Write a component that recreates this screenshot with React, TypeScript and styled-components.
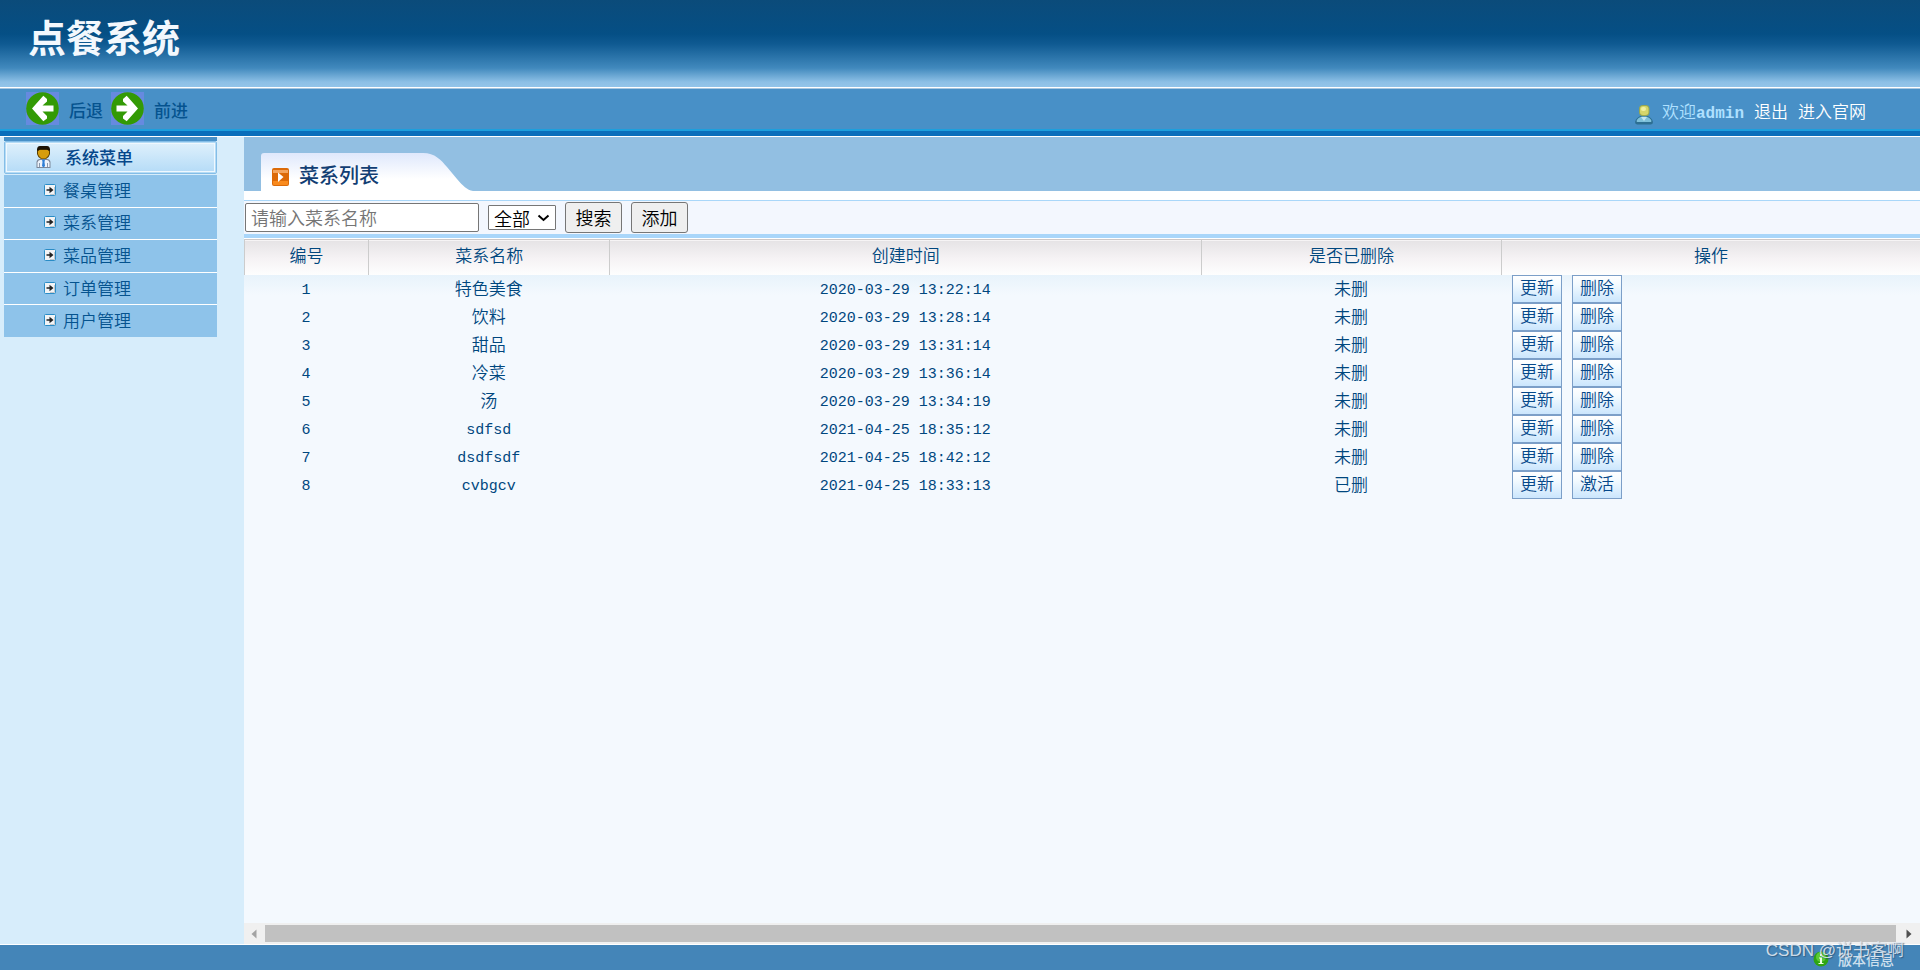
import React from 'react';
import styled, { createGlobalStyle, css } from 'styled-components';

const cjk = `'Liberation Mono', 'Noto Sans CJK SC', monospace`;
const ui = `'Noto Sans CJK SC', sans-serif`;

const GlobalStyle = createGlobalStyle`
  * { box-sizing: border-box; }
  body { margin: 0; background: #d7edfb; font-family: ${ui}; font-size: 17px; font-weight: 350; color: #00477e; }
  a { color: inherit; text-decoration: none; }
  button { font-family: inherit; font-weight: inherit; cursor: pointer; }
`;

const Page = styled.div`
  min-height: 100vh;
  display: flex;
  flex-direction: column;
`;

const Banner = styled.header`
  height: 89px;
  padding: 0 28px;
  border-bottom: 1px solid #a6c6e0;
  box-shadow: inset 0 -1px 0 #fff;
  background: linear-gradient(#0b4b7a 0, #054f85 34px, #0f5a92 44px, #4189bd 68px, #8dc0e6 82px, #94c5ea 88px);
`;

const Title = styled.h1`
  margin: 0;
  font-size: 38px;
  line-height: 72px;
  font-weight: 700;
  color: #f3f8fd;
`;

const TopBar = styled.nav`
  height: 48px;
  padding: 0 54px 0 26px;
  display: flex;
  align-items: center;
  justify-content: space-between;
  background: linear-gradient(#4890c7 0 40px, #1d9fdd 40px 42px, #0a6ebb 42px 47px, #fff 47px);
`;

const History = styled.div`
  height: 48px;
  padding: 3px 0 0;
  display: flex;
  gap: 8px;
`;

const HistoryButton = styled.button`
  height: 33px;
  padding: 0;
  border: 0;
  background: none;
  display: flex;
  align-items: center;
  gap: 10px;
  font-size: 17px;
  font-weight: 500;
  color: #05538f;

  svg { background: #668adf; }
  span { padding-top: 2px; }
`;

const Account = styled.div`
  height: 48px;
  padding-top: 10px;
  display: flex;
  line-height: 24px;
  color: #fff;

  svg { margin: 6px 9px 0 0; }
  a { margin-left: 10px; }
`;

const Welcome = styled.span`
  color: #afe0ff;

  b { font-family: 'Liberation Mono', monospace; font-size: 16px; font-weight: 700; }
`;

const Body = styled.div`
  flex: 1;
  display: flex;
  border-bottom: 1px solid #fff;
`;

const Sidebar = styled.aside`
  width: 244px;
  flex: none;
  padding: 0 27px 0 4px;
`;

const MenuHead = styled.h2`
  margin: 0;
  height: 38px;
  border-top: 4px solid #4890c7;
  display: flex;
  font-size: 17px;
  font-weight: 500;
  line-height: 24px;
  color: #05478a;
`;

const MenuHeadInner = styled.span`
  flex: 1;
  margin-bottom: 1px;
  padding: 0 0 2px 31px;
  display: flex;
  align-items: center;
  gap: 14px;
  border: 1px solid #84bde7;
  border-radius: 2px;
  box-shadow: inset 0 0 0 1px #b5dcf6, inset 0 0 0 2px #f0f8fe;
  background: linear-gradient(#e0f1fc, #b4dbf7);
`;

const Menu = styled.ul`
  margin: 0;
  padding: 0;
  height: 162px;
  list-style: none;
  display: grid;
  grid-template-rows: repeat(5, 1fr);
  gap: 1px;
  background: #fff;
`;

const MenuLink = styled.a`
  height: 100%;
  padding: 0 0 2px 40px;
  display: flex;
  align-items: center;
  gap: 7px;
  line-height: 24px;
  background: #8ec3ea;
  color: #05538f;
`;

const Main = styled.main`
  flex: 1;
  min-width: 0;
  display: flex;
  flex-direction: column;
  background: #f4f9fe;
`;

const TabStrip = styled.div`
  height: 63px;
  padding: 16px 17px 0;
  background: linear-gradient(#92bfe2 0 54px, #fff 54px);
`;

const Tab = styled.h2`
  margin: 0;
  width: 212px;
  height: 38px;
  padding: 5px 0 0 11px;
  display: flex;
  align-items: center;
  gap: 10px;
  font-size: 20px;
  font-weight: 500;
  line-height: 32px;
  color: #123e73;
  background: linear-gradient(#dfe8fc, #fff 26px);
  clip-path: path('M0 38V3Q0 0 3 0H162C174 0 180 7 186 14L196 26C202 33 206 37 212 38Z');

  svg { margin-top: 4px; }
`;

const Filters = styled.form`
  height: 38px;
  padding: 1px;
  display: flex;
  align-items: center;
  border-top: 1px solid #a9d7f9;
  border-bottom: 4px solid #a9d6fa;
  background: #f3f7fe;
`;

const field = css`
  border: 1px solid #767676;
  border-radius: 3px;
  font-family: ${ui};
  font-size: 18px;
  font-weight: 350;
  color: #000;
`;

const SearchBox = styled.input`
  ${field}
  width: 234px;
  height: 29px;
  padding: 0 5px 2px;
  border-radius: 2px;
  &::placeholder { color: #757575; }
`;

const StatusField = styled.div`
  position: relative;
  margin-left: 9px;
  display: flex;

  svg {
    position: absolute;
    right: 6px;
    top: 9px;
    pointer-events: none;
  }
`;

const Status = styled.select`
  ${field}
  appearance: none;
  width: 68px;
  height: 25px;
  padding: 0 5px;
  border-radius: 1px;
  line-height: 22px;
  background: #fff;
`;

const FilterButton = styled.button`
  ${field}
  width: 57px;
  height: 31px;
  margin-left: 9px;
  padding: 0 0 2px;
  line-height: 26px;
  background: #efefef;
`;

const TableArea = styled.div`
  flex: 1;
  border-top: 1px solid #fff;
`;

const Table = styled.table`
  width: 100%;
  table-layout: fixed;
  border-collapse: separate;
  border-spacing: 0;
  font-family: ${cjk};
  font-size: 17px;

  tbody { background: linear-gradient(#e8f3fb, #f4f9fe 20px); }
`;

const Col = styled.col<{ $w: string }>`
  width: ${(p) => p.$w};
`;

const Th = styled.th`
  height: 36px;
  padding: 0;
  border-top: 1px solid #ccc8c8;
  border-left: 1px solid #ccc;
  box-shadow: inset 0 1px 0 #f6f4f5;
  font-weight: inherit;
  line-height: 24px;
  background: linear-gradient(#e5e3e5, #f5f2f4 18px, #fefefe);
`;

const Td = styled.td<{ $latin?: boolean }>`
  height: 28px;
  padding: 4px 0 0;
  text-align: center;
  line-height: 24px;
  font-size: ${(p) => (p.$latin ? '15px' : '17px')};
`;

const ActionTd = styled.td`
  height: 28px;
  padding: 0;
`;

const Actions = styled.div`
  height: 28px;
  padding-left: 11px;
  display: flex;
  gap: 10px;
`;

const RowButton = styled.button`
  width: 50px;
  height: 28px;
  padding: 2px 0 0;
  border: 1px solid #7c9fc8;
  font-size: 17px;
  line-height: 24px;
  color: #05488a;
  background: linear-gradient(#ffffff, #f4fbff 8px, #cbe6fd);
`;

const ScrollTrack = styled.div`
  height: 21px;
  padding: 2px 8px 2px 7px;
  display: flex;
  align-items: center;
  justify-content: space-between;
  gap: 8px;
  background: #f0f0f0;
`;

const ScrollThumb = styled.div`
  flex: 1;
  height: 17px;
  margin-right: 2px;
  background: #c1c1c1;
`;

const Footer = styled.footer`
  position: relative;
  height: 25px;
  padding: 3px 26px 0 0;
  display: flex;
  align-items: center;
  justify-content: flex-end;
  gap: 9px;
  font-size: 14px;
  font-weight: 500;
  line-height: 20px;
  background: #4485b8;
  color: #cfe0ee;
`;

const Watermark = styled.span`
  position: absolute;
  right: 16px;
  bottom: 8px;
  font-family: 'Liberation Sans', 'Noto Sans CJK SC', sans-serif;
  font-size: 17px;
  font-weight: 400;
  line-height: 22px;
  color: rgba(226, 234, 242, 0.9);
  text-shadow: 1px 1px 1px rgba(40, 70, 100, 0.6);
`;

const ArrowDisc = ({ flip }: { flip?: boolean }) => (
  <svg width="33" height="33" viewBox="0 0 33 33" aria-hidden="true">
    <circle cx="16.5" cy="16.5" r="16.3" fill="#339a05" />
    <g transform={flip ? 'translate(33 0) scale(-1 1)' : undefined}>
      <path d="M6 16.5 17.3 3.8 21 7V9.500L16.500 13.5H27.5V19.5H16.500L21 24V26.5L17.3 29.3Z" fill="#fff" />
    </g>
  </svg>
);

const UserIcon = () => (
  <svg width="18" height="20" viewBox="0 0 18 20" aria-hidden="true">
    <path d="M0 17Q1 12 7 10.5H11Q17 12 18 17Q18 19 16 19.5H2Q0 19 0 17Z" fill="#2d6f92" />
    <path d="M1.500 16Q2.500 12.500 7 11.500H11Q15.500 12.500 16.500 16L16 17H2Z" fill="#7dc0da" />
    <path d="M6 12 9 16 12 12Z" fill="#c2e6f2" />
    <rect x="4" y="0" width="10.500" height="11" rx="4" fill="#9ba84d" />
    <rect x="5" y="1" width="8.500" height="9" rx="3" fill="#d6d66b" />
    <rect x="6" y="2" width="5" height="4" rx="2" fill="#f0efa0" />
  </svg>
);

const ManagerIcon = () => (
  <svg width="15" height="22" viewBox="0 0 15 22" aria-hidden="true">
    <path d="M0.500 22V16Q1 13 4 13H11Q14 13 14.500 16V22Z" fill="#7c8798" />
    <path d="M1.500 21V16.500Q2 14 4 14H11Q13 14 13.500 16.500V21Z" fill="#edf3fb" />
    <path d="M3.500 17V21M11.500 17V21" stroke="#8a99ad" />
    <path d="M6 13.500H9L8.500 16 9 20 7.500 21.500 6 20 6.500 16Z" fill="#2f7fd6" />
    <path d="M1 3H14V8Q13.500 11 10 13H5Q1.500 11 1 8Z" fill="#5a3f00" />
    <path d="M2 4H13V8Q12.500 10.500 9.500 12.500H5.500Q2.500 10.500 2 8Z" fill="#d69d0c" />
    <path d="M1 4Q1 0 4 0H11Q14 0 14 4L13 5 11 3.500H4L2 5Z" fill="#1d1204" />
  </svg>
);

const ItemIcon = () => (
  <svg width="12" height="12" viewBox="0 0 12 12" aria-hidden="true">
    <rect x="0.500" y="0.500" width="11" height="11" rx="1" fill="#f2f4f6" stroke="#2a8cc6" />
    <path d="M6 10.500H10.500V3" stroke="#c3c8cd" fill="none" />
    <path d="M2.500 5.200H5.500V2.800L9.500 6 5.500 9.200V6.800H2.500Z" fill="#222" />
  </svg>
);

const TabIcon = () => (
  <svg width="17" height="18" viewBox="0 0 17 18" aria-hidden="true">
    <rect width="17" height="18" rx="2" fill="#dc6a08" />
    <path d="M1 2H16V5H1Z" fill="#f4a55e" />
    <path d="M1 13H16V16Q16 17 15 17H2Q1 17 1 16Z" fill="#f98a1d" />
    <path d="M6 4.500 11.500 9 6 14Z" fill="#fff" />
  </svg>
);

const InfoIcon = () => (
  <svg width="16" height="16" viewBox="0 0 16 16" aria-hidden="true">
    <circle cx="8" cy="8" r="7.500" fill="#2fa512" />
    <circle cx="8" cy="6" r="5" fill="#5ccb35" />
    <path d="M6 6.500H9V12H10.500V13H5.500V12H7V7.500H6ZM7 3H9V5H7Z" fill="#e9ffe0" />
  </svg>
);

const Chevron = () => (
  <svg width="13" height="8" viewBox="0 0 13 8" aria-hidden="true">
    <path d="M1.500 1.500 6.500 6 11.500 1.500" fill="none" stroke="#000" strokeWidth="2" />
  </svg>
);

const ScrollArrow = ({ right }: { right?: boolean }) => (
  <svg width="6" height="10" viewBox="0 0 6 10" aria-hidden="true">
    <path d={right ? 'M0.500 0.500V9.500L5.500 5Z' : 'M5.500 0.500V9.500L0.500 5Z'} fill={right ? '#505050' : '#a3a3a3'} />
  </svg>
);

const menu = ['餐桌管理', '菜系管理', '菜品管理', '订单管理', '用户管理'];
const columns = ['编号', '菜系名称', '创建时间', '是否已删除', '操作'];
const widths = ['7.4%', '14.4%', '35.3%', '17.9%', '25%'];

const rows = [
  { name: '特色美食', time: '2020-03-29 13:22:14', deleted: false },
  { name: '饮料', time: '2020-03-29 13:28:14', deleted: false },
  { name: '甜品', time: '2020-03-29 13:31:14', deleted: false },
  { name: '冷菜', time: '2020-03-29 13:36:14', deleted: false },
  { name: '汤', time: '2020-03-29 13:34:19', deleted: false },
  { name: 'sdfsd', time: '2021-04-25 18:35:12', deleted: false },
  { name: 'dsdfsdf', time: '2021-04-25 18:42:12', deleted: false },
  { name: 'cvbgcv', time: '2021-04-25 18:33:13', deleted: true },
];

const isLatin = (text: string) => /^[\x20-\x7e]+$/.test(text);

export default function App() {
  return (
    <Page>
      <GlobalStyle />
      <Banner>
        <Title>点餐系统</Title>
      </Banner>
      <TopBar>
        <History>
          <HistoryButton type="button"><ArrowDisc /><span>后退</span></HistoryButton>
          <HistoryButton type="button"><ArrowDisc flip /><span>前进</span></HistoryButton>
        </History>
        <Account>
          <UserIcon />
          <Welcome>欢迎<b>admin</b></Welcome>
          <a href="#logout">退出</a>
          <a href="#site">进入官网</a>
        </Account>
      </TopBar>
      <Body>
        <Sidebar>
          <MenuHead><MenuHeadInner><ManagerIcon />系统菜单</MenuHeadInner></MenuHead>
          <Menu>
            {menu.map((item) => (
              <li key={item}><MenuLink href="#menu"><ItemIcon />{item}</MenuLink></li>
            ))}
          </Menu>
        </Sidebar>
        <Main>
          <TabStrip>
            <Tab><TabIcon />菜系列表</Tab>
          </TabStrip>
          <Filters onSubmit={(e) => e.preventDefault()}>
            <SearchBox type="text" placeholder="请输入菜系名称" aria-label="请输入菜系名称" />
            <StatusField>
              <Status aria-label="是否已删除" defaultValue="all">
                <option value="all">全部</option>
              </Status>
              <Chevron />
            </StatusField>
            <FilterButton type="submit">搜索</FilterButton>
            <FilterButton type="button">添加</FilterButton>
          </Filters>
          <TableArea>
            <Table>
              <colgroup>
                {widths.map((w, i) => <Col key={i} $w={w} />)}
              </colgroup>
              <thead>
                <tr>{columns.map((c) => <Th key={c} scope="col">{c}</Th>)}</tr>
              </thead>
              <tbody>
                {rows.map((row, i) => (
                  <tr key={row.name}>
                    <Td $latin>{i + 1}</Td>
                    <Td $latin={isLatin(row.name)}>{row.name}</Td>
                    <Td $latin>{row.time}</Td>
                    <Td>{row.deleted ? '已删' : '未删'}</Td>
                    <ActionTd>
                      <Actions>
                        <RowButton type="button">更新</RowButton>
                        <RowButton type="button">{row.deleted ? '激活' : '删除'}</RowButton>
                      </Actions>
                    </ActionTd>
                  </tr>
                ))}
              </tbody>
            </Table>
          </TableArea>
          <ScrollTrack aria-hidden="true">
            <ScrollArrow />
            <ScrollThumb />
            <ScrollArrow right />
          </ScrollTrack>
        </Main>
      </Body>
      <Footer>
        <InfoIcon />
        <span>版本信息</span>
        <Watermark>CSDN @说书客啊</Watermark>
      </Footer>
    </Page>
  );
}
